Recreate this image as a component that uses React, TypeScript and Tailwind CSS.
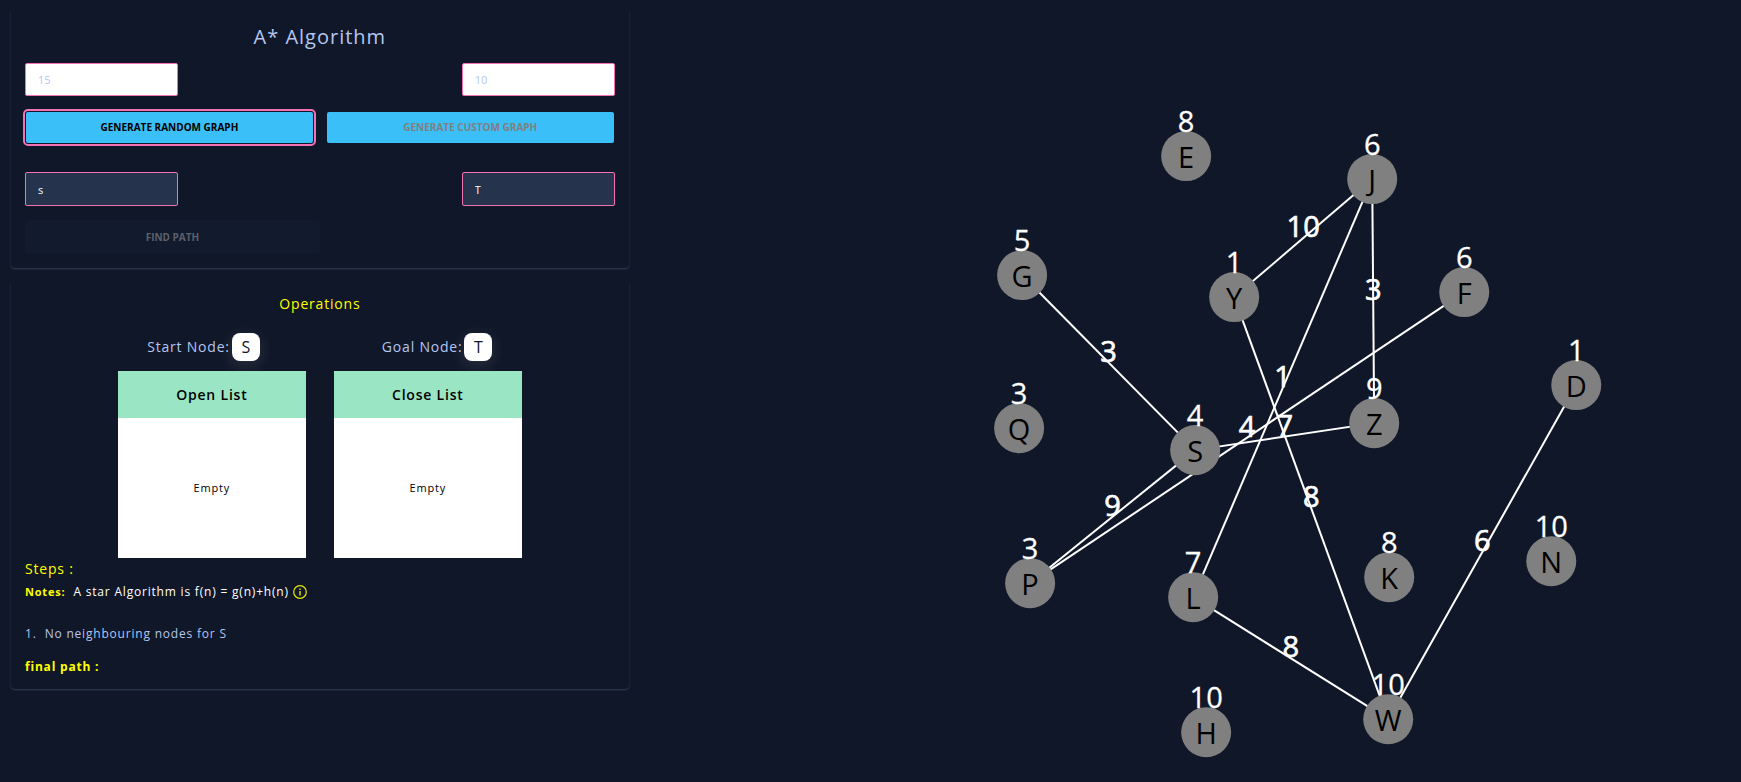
import React from "react";

type GraphNode = { id: string; x: number; y: number; h: number };
type GraphEdge = { from: string; to: string; cost: number };

const nodes: GraphNode[] = [
  { id: "E", x: 1186, y: 156, h: 8 },
  { id: "J", x: 1372, y: 179, h: 6 },
  { id: "G", x: 1022, y: 275, h: 5 },
  { id: "Y", x: 1234, y: 297, h: 1 },
  { id: "F", x: 1464, y: 292, h: 6 },
  { id: "D", x: 1576, y: 385, h: 1 },
  { id: "Q", x: 1019, y: 428, h: 3 },
  { id: "S", x: 1195, y: 450, h: 4 },
  { id: "Z", x: 1374, y: 423, h: 9 },
  { id: "P", x: 1030, y: 583, h: 3 },
  { id: "L", x: 1193, y: 597, h: 7 },
  { id: "K", x: 1389, y: 577, h: 8 },
  { id: "N", x: 1551, y: 561, h: 10 },
  { id: "W", x: 1388, y: 719, h: 10 },
  { id: "H", x: 1206, y: 732, h: 10 },
];

const edges: GraphEdge[] = [
  { from: "J", to: "Y", cost: 10 },
  { from: "J", to: "Z", cost: 3 },
  { from: "J", to: "L", cost: 1 },
  { from: "G", to: "S", cost: 3 },
  { from: "F", to: "P", cost: 4 },
  { from: "S", to: "Z", cost: 7 },
  { from: "S", to: "P", cost: 9 },
  { from: "Y", to: "W", cost: 8 },
  { from: "L", to: "W", cost: 8 },
  { from: "D", to: "W", cost: 6 },
];

const byId = (id: string) => nodes.find((n) => n.id === id)!;

function Graph() {
  return (
    <svg
      viewBox="641 0 1100 781"
      className="block w-full text-[29px]"
      role="img"
      aria-label="Graph"
      textAnchor="middle"
    >
      {edges.map((e) => {
        const a = byId(e.from);
        const b = byId(e.to);
        return <line key={e.from + e.to} x1={a.x} y1={a.y} x2={b.x} y2={b.y} stroke="#fff" strokeWidth="2" />;
      })}
      {nodes.map((n) => (
        <g key={n.id}>
          <circle cx={n.x} cy={n.y} r="25" fill="#808080" />
          <text x={n.x} y={n.y + 12} fill="#000">{n.id}</text>
          <text x={n.x} y={n.y - 24} fill="#fff" stroke="#fff" strokeWidth="0.3">{n.h}</text>
        </g>
      ))}
      {edges.map((e) => {
        const a = byId(e.from);
        const b = byId(e.to);
        return (
          <text
            key={e.from + e.to}
            x={(a.x + b.x) / 2}
            y={(a.y + b.y) / 2 - 1}
            fill="#fff"
            stroke="#fff"
            strokeWidth="0.7"
          >
            {e.cost}
          </text>
        );
      })}
    </svg>
  );
}

function Card({ children }: { children: React.ReactNode }) {
  return (
    <section className="rounded-sm bg-[#101728] px-[14px] shadow-[0_1px_2px_#334155]">{children}</section>
  );
}

function Badge({ children }: { children: React.ReactNode }) {
  return (
    <span className="flex size-7 items-center justify-center rounded-lg bg-white text-base tracking-normal text-[#101728] shadow-[0_4px_16px_rgba(255,255,255,0.12)]">
      {children}
    </span>
  );
}

function ListBox({ title }: { title: string }) {
  return (
    <div className="w-[188px] bg-white text-center text-black">
      <h3 className="bg-[#9ae6c4] text-sm leading-[47px] font-semibold">{title}</h3>
      <p className="text-[11px] leading-[140px]">Empty</p>
    </div>
  );
}

const lightField =
  "h-[33px] w-[153px] rounded-xs border border-[#f471b5] bg-white px-3 text-[11px] text-slate-800 outline-none placeholder:text-[#b4c6ef]";
const darkField =
  "h-[34px] w-[153px] rounded-xs border border-[#f471b5] bg-[#26334d] px-3 text-[11px] text-white outline-none";

export default function App() {
  return (
    <div className="flex min-h-screen bg-[#101728] font-['Open_Sans','Noto_Sans',sans-serif] text-[#b4c6ef]">
      <main className="flex w-[36.8%] shrink-0 flex-col gap-3 py-2 pr-3 pl-[11px]">
        <Card>
          <h1 className="pt-[13px] text-center text-xl leading-8 tracking-wider">A* Algorithm</h1>
          <div className="mt-[10px] flex justify-between">
            <input className={lightField} placeholder="15" aria-label="Number of nodes" />
            <input className={lightField} placeholder="10" aria-label="Number of edges" />
          </div>
          <div className="mt-4 grid grid-cols-2 gap-[14px] px-px text-[10px] font-bold">
            <button className="h-[31px] rounded-xs bg-[#3abff8] text-black outline-2 outline-offset-1 outline-[#f471b5]">
              GENERATE RANDOM GRAPH
            </button>
            <button className="h-[31px] rounded-xs bg-[#3abff8] text-[#808080]" disabled>
              GENERATE CUSTOM GRAPH
            </button>
          </div>
          <div className="mt-[29px] flex justify-between">
            <input className={darkField} defaultValue="s" aria-label="Start node" />
            <input className={darkField} defaultValue="T" aria-label="Goal node" />
          </div>
          <div className="py-[14px]">
            <button className="h-[34px] w-1/2 rounded-sm bg-[#121b2d] text-[10px] font-bold text-[#5b616c]" disabled>
              FIND PATH
            </button>
          </div>
        </Card>

        <Card>
          <div className="tracking-wider">
            <h2 className="pt-3 text-center text-sm leading-6 text-[#ff0]">Operations</h2>
            <div className="mt-[17px] flex justify-center gap-[122px] text-sm">
              <p className="flex items-center gap-[2px]">Start Node:<Badge>S</Badge></p>
              <p className="flex items-center gap-[2px]">Goal Node:<Badge>T</Badge></p>
            </div>
            <div className="mt-[10px] flex justify-center gap-7">
              <ListBox title="Open List" />
              <ListBox title="Close List" />
            </div>
            <h3 className="text-sm leading-[22px] text-[#ff0]">Steps :</h3>
            <p className="flex items-center text-xs leading-6 text-white">
              <b className="mr-2 text-[11px] text-[#ff0]">Notes:</b>
              A star Algorithm is f(n) = g(n)+h(n)
              <svg viewBox="0 0 14 14" className="ml-1 size-[14px]" fill="none" stroke="#e6e600" aria-hidden="true">
                <circle cx="7" cy="7" r="6.3" strokeWidth="1.2" />
                <path d="M7 6v4.5M7 3.5v1.4" strokeWidth="1.4" />
              </svg>
            </p>
            <ol className="mt-[18px] text-xs leading-6">
              <li className="flex gap-2"><span>1.</span>No neighbouring nodes for S</li>
            </ol>
            <p className="mt-[9px] pb-[10px] text-xs leading-6 font-bold text-[#ff0]">final path :</p>
          </div>
        </Card>
      </main>
      <div className="min-w-0 flex-1">
        <Graph />
      </div>
    </div>
  );
}
